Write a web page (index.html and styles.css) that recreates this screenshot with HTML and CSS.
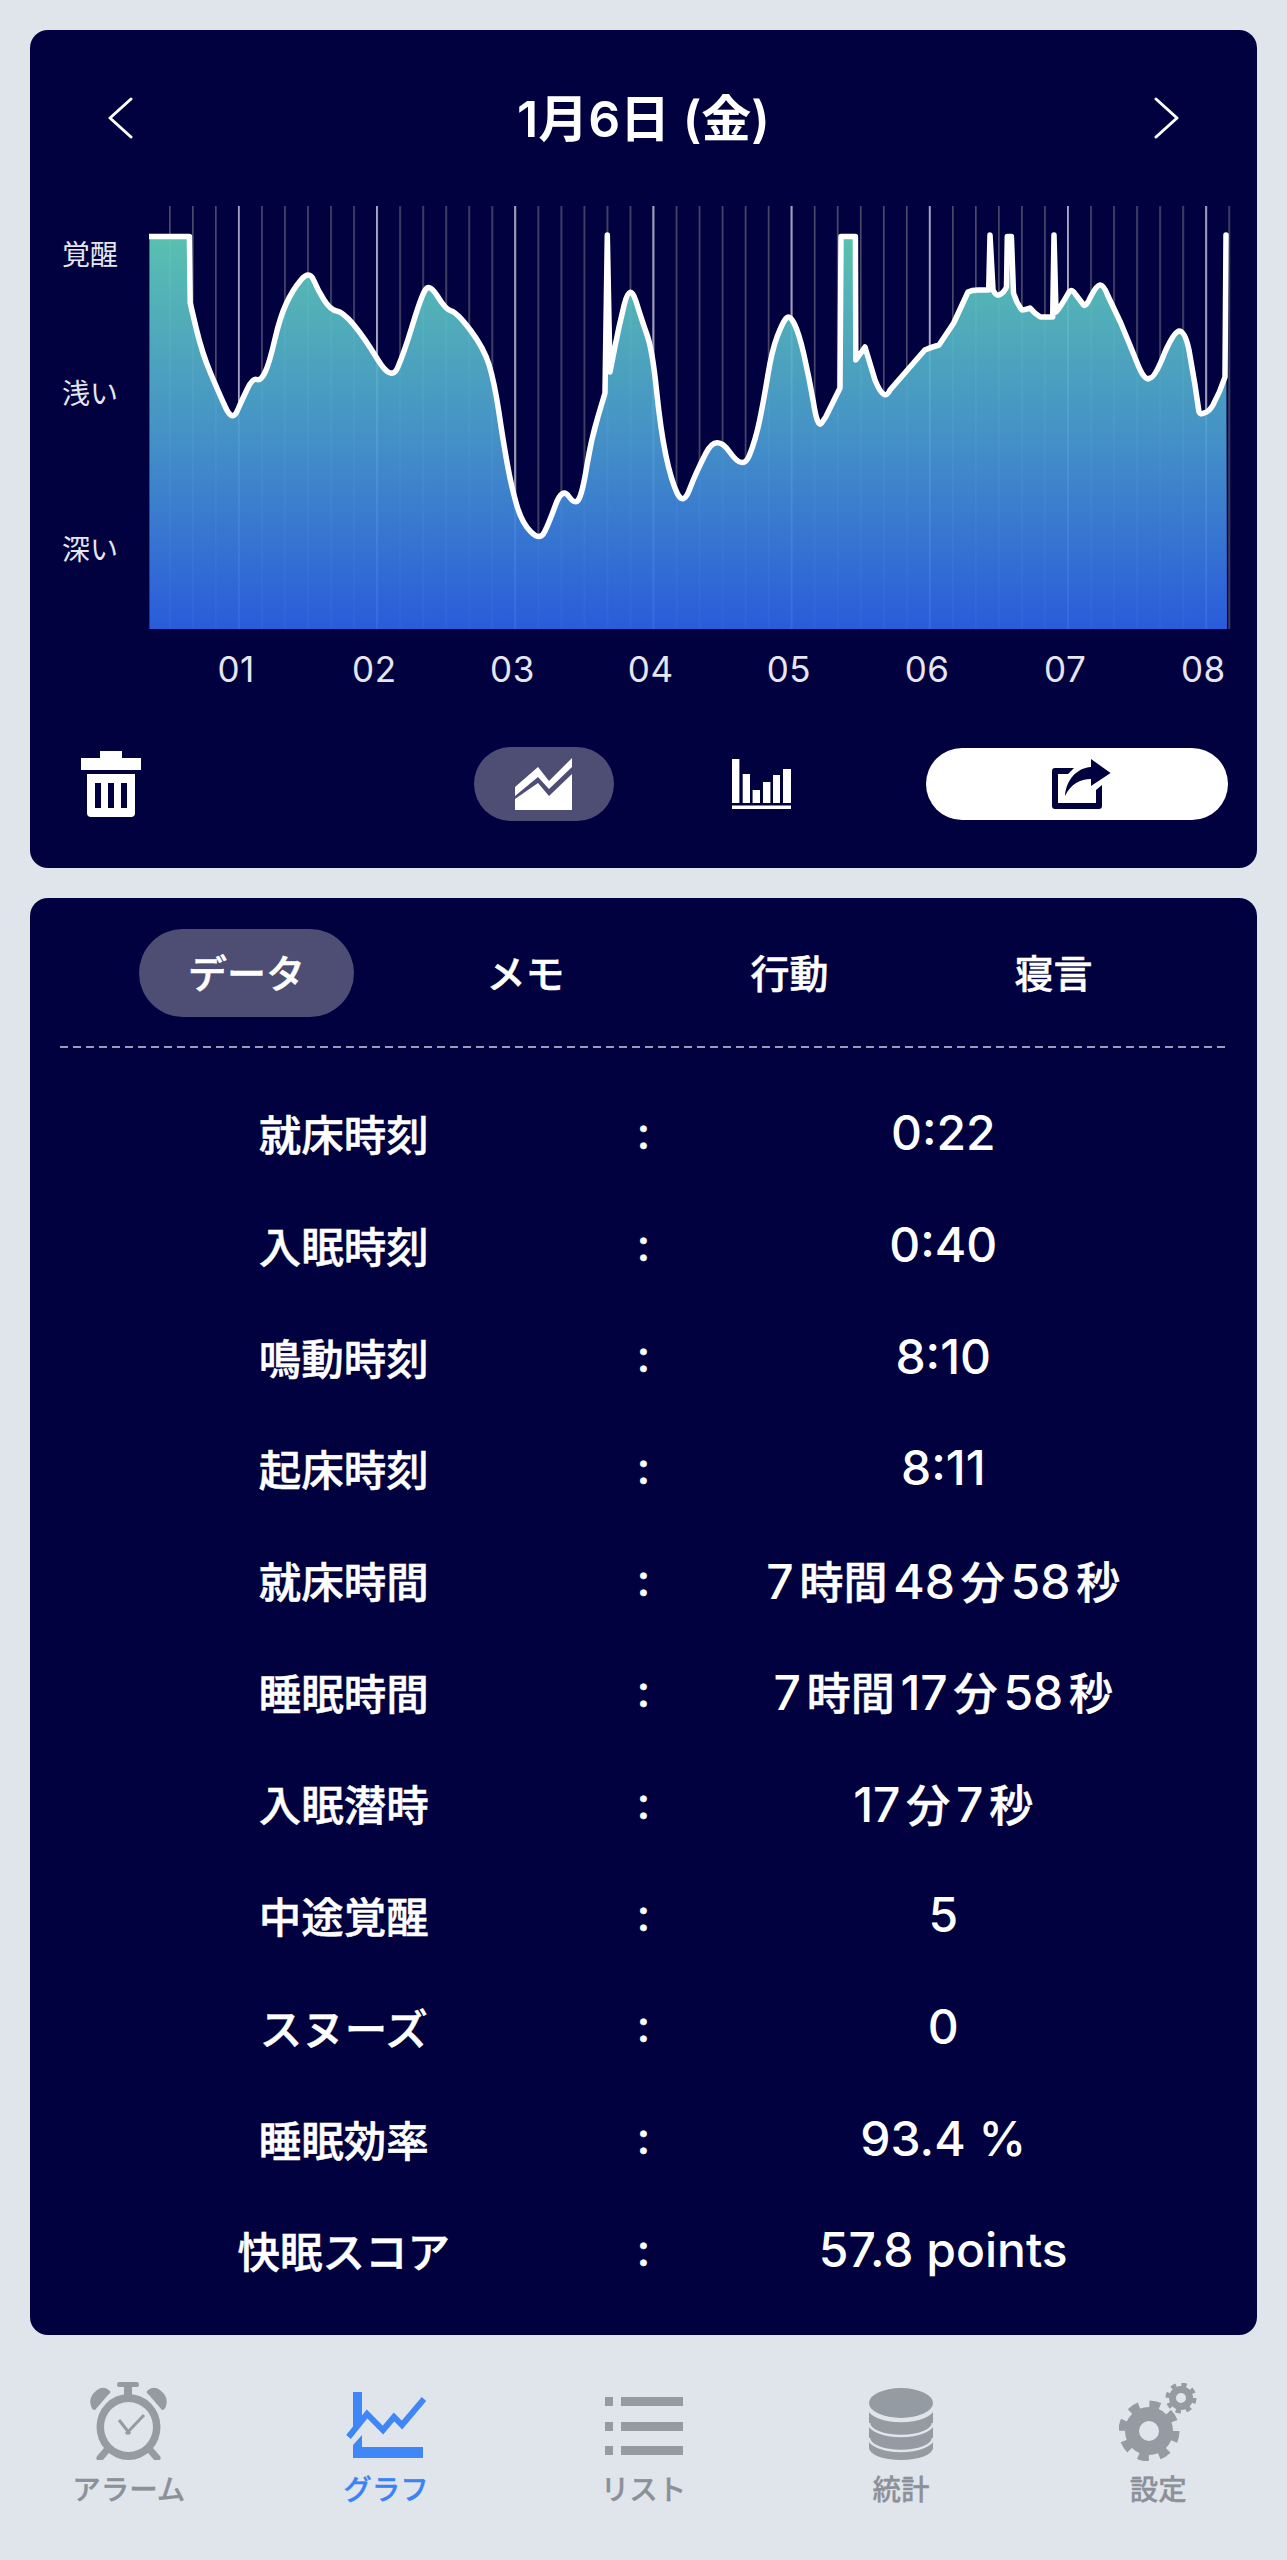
FILE: index.html
```html
<!DOCTYPE html>
<html lang="ja">
<head>
    <meta charset="UTF-8">
    <title>グラフ</title>
    <link rel="stylesheet" href="styles.css">
</head>
<body>
    <div class="card graph-card">
        <div class="date-nav">
            <svg class="chevron" viewBox="0 0 26 42"><path d="M24 2 3 21 24 40"/></svg>
            <h2 class="date-title">1月6日 (金)</h2>
            <svg class="chevron" viewBox="0 0 26 42"><path d="M2 2 23 21 2 40"/></svg>
        </div>

        <div class="chart-row">
            <div class="y-axis">
                <span>覚醒</span>
                <span>浅い</span>
                <span>深い</span>
            </div>
            <svg class="chart" viewBox="149 206 1083 424">
                <defs>
                    <linearGradient id="sleepFill" x1="0" y1="0" x2="0" y2="1">
                        <stop offset="0" stop-color="#60cfb8"/>
                        <stop offset="0.5" stop-color="#4a9dd0"/>
                        <stop offset="1" stop-color="#2d62e6"/>
                    </linearGradient>
                    <pattern id="minorGrid" patternUnits="userSpaceOnUse" x="169" y="0" width="23.03" height="10">
                        <rect width="1.6" height="10" fill="#4b4b69"/>
                    </pattern>
                    <pattern id="majorGrid" patternUnits="userSpaceOnUse" x="237.8" y="0" width="138.2" height="10">
                        <rect width="1.8" height="10" fill="#a9a8c6"/>
                    </pattern>
                </defs>
                <rect x="169" y="206" width="1062" height="423" fill="url(#minorGrid)"/>
                <rect x="237.8" y="206" width="970" height="423" fill="url(#majorGrid)"/>
                <path class="sleep-area" d="M149.4 629V236.5H189.4L190.2 303 196.1 328Q202 353 210.5 373 218.9 393 225.6 407.5 232.3 422 237.2 411 242 400 247.3 389 252.5 378 256.8 379.5 261 381 265.2 372 269.4 363 274.7 340 280 317 286.3 303.5 292.5 290 300.9 280 309.3 270 313.6 280 317.8 290 324.1 300 330.4 310 336.7 311 343 312 353.5 324.5 364 337 377.7 359.5 391.4 382 397.7 367.5 404 353 412.5 325 421 297 425.2 290 429.3 283 437.7 296.5 446 310 451.3 311 456.6 312 470.3 330 484 348 489.3 365.5 494.5 383 498.8 411.5 503 440 507.2 463.5 511.4 487 516.7 505 521.9 523 531 532 540 541 544.5 532 549 523 555.5 505 562 487 568.9 496.5 575.8 506 579.4 498 583 490 587 465 591 440 598 416.5L605 393 607.3 235 610 372 614.4 349.5Q618.7 327 624.3 304.5 630 282 635.9 301 641.8 320 647.1 335 652.4 350 656.5 390 660.6 430 665.8 455 671 480 677.1 493 683.3 506 689.5 489.5 695.7 473 706 453 716.4 433 729.7 452 743 471 749.3 455.5 755.6 440 759.7 420 763.8 400 767.9 375 772 350 777.2 336.5 782.4 323 785.9 318.5 789.4 314 794.2 323.5 799 333 804 355 809 377 813.2 401 817.5 429 821.6 423L825.7 417 840 388 841 236.5H855.4L855.8 360 865 347 875 380Q884.3 403 890 390L924.8 350Q932 347 939 345L953.7 323 968 292Q972 290 978 290L988.7 290 990 235 993 290Q996 296 999 295 1004 293 1006.5 287L1007.3 236.5H1011.4L1013.5 293Q1016 302 1021.8 310 1025 310 1030 308 1034 313 1040.3 317H1052.7L1054 235 1056 312Q1060 308 1069 292 1072 288 1076 295L1083.7 305Q1086 307 1090 298 1097 284 1100 285 1104 285 1108 296L1120.8 323Q1130 345 1138 365 1145 382 1150 378 1155 378 1165 352 1174 332 1179 331 1185 331 1189 350L1195 385 1199 412Q1200 415 1204 413 1209 412 1213 405 1220 392 1225 377L1226 235 1227 629Z"/>
                <path class="sleep-line" d="M149.4 236.5H189.4L190.2 303 196.1 328Q202 353 210.5 373 218.9 393 225.6 407.5 232.3 422 237.2 411 242 400 247.3 389 252.5 378 256.8 379.5 261 381 265.2 372 269.4 363 274.7 340 280 317 286.3 303.5 292.5 290 300.9 280 309.3 270 313.6 280 317.8 290 324.1 300 330.4 310 336.7 311 343 312 353.5 324.5 364 337 377.7 359.5 391.4 382 397.7 367.5 404 353 412.5 325 421 297 425.2 290 429.3 283 437.7 296.5 446 310 451.3 311 456.6 312 470.3 330 484 348 489.3 365.5 494.5 383 498.8 411.5 503 440 507.2 463.5 511.4 487 516.7 505 521.9 523 531 532 540 541 544.5 532 549 523 555.5 505 562 487 568.9 496.5 575.8 506 579.4 498 583 490 587 465 591 440 598 416.5L605 393 607.3 235 610 372 614.4 349.5Q618.7 327 624.3 304.5 630 282 635.9 301 641.8 320 647.1 335 652.4 350 656.5 390 660.6 430 665.8 455 671 480 677.1 493 683.3 506 689.5 489.5 695.7 473 706 453 716.4 433 729.7 452 743 471 749.3 455.5 755.6 440 759.7 420 763.8 400 767.9 375 772 350 777.2 336.5 782.4 323 785.9 318.5 789.4 314 794.2 323.5 799 333 804 355 809 377 813.2 401 817.5 429 821.6 423L825.7 417 840 388 841 236.5H855.4L855.8 360 865 347 875 380Q884.3 403 890 390L924.8 350Q932 347 939 345L953.7 323 968 292Q972 290 978 290L988.7 290 990 235 993 290Q996 296 999 295 1004 293 1006.5 287L1007.3 236.5H1011.4L1013.5 293Q1016 302 1021.8 310 1025 310 1030 308 1034 313 1040.3 317H1052.7L1054 235 1056 312Q1060 308 1069 292 1072 288 1076 295L1083.7 305Q1086 307 1090 298 1097 284 1100 285 1104 285 1108 296L1120.8 323Q1130 345 1138 365 1145 382 1150 378 1155 378 1165 352 1174 332 1179 331 1185 331 1189 350L1195 385 1199 412Q1200 415 1204 413 1209 412 1213 405 1220 392 1225 377L1226 235"/>
            </svg>
        </div>

        <div class="x-axis">
            <span>01</span><span>02</span><span>03</span><span>04</span>
            <span>05</span><span>06</span><span>07</span><span>08</span>
        </div>

        <div class="toolbar">
            <svg class="icon-trash" viewBox="0 0 60 66">
                <path d="M19 0H41V7H60V19H0V7H19Z"/>
                <path fill-rule="evenodd" d="M6 23H54V62Q54 66 50 66H10Q6 66 6 62ZM14 32V57H20V32ZM27 32V57H33V32ZM40 32V57H46V32Z"/>
            </svg>
            <div class="mode-pill">
                <svg class="icon-area" viewBox="0 0 58 52">
                    <path d="M1 29 24 9 35 23 58 0V9L35 31 24 19 1 38Z"/>
                    <path d="M1 52V41L24 25 35 38 58 16V52Z"/>
                </svg>
            </div>
            <div class="mode-plain">
                <svg class="icon-bars" viewBox="0 0 59 50">
                    <path d="M0 0H7.4V44H0ZM10.7 15H18V44H10.7ZM20.6 31H28V44H20.6ZM31 23H38.4V44H31ZM41 16H48V44H41ZM51 10H59V44H51ZM0 46.5H59V50H0Z"/>
                </svg>
            </div>
            <div class="share-btn">
                <svg class="icon-share" viewBox="0 0 59 50">
                    <path d="M22 9H3Q0 9 0 12V47Q0 50 3 50H47Q50 50 50 47V26L44 31V44H6V15H16Z"/>
                    <path d="M39 0 58.6 14 39 27V20C28 20 19 25 13 37 14 22 24 9 39 8Z"/>
                </svg>
            </div>
        </div>
    </div>

    <div class="card data-card">
        <div class="tabs">
            <div class="tab active">データ</div>
            <div class="tab">メモ</div>
            <div class="tab">行動</div>
            <div class="tab">寝言</div>
        </div>
        <div class="tabs-divider"></div>

        <div class="rows">
            <div class="row"><span>就床時刻</span><span class="sep">:</span><span class="val">0:22</span></div>
            <div class="row"><span>入眠時刻</span><span class="sep">:</span><span class="val">0:40</span></div>
            <div class="row"><span>鳴動時刻</span><span class="sep">:</span><span class="val">8:10</span></div>
            <div class="row"><span>起床時刻</span><span class="sep">:</span><span class="val">8:11</span></div>
            <div class="row"><span>就床時間</span><span class="sep">:</span><span class="val duration">7 <span class="unit">時間</span> 48 <span class="unit">分</span> 58 <span class="unit">秒</span></span></div>
            <div class="row"><span>睡眠時間</span><span class="sep">:</span><span class="val duration">7 <span class="unit">時間</span> 17 <span class="unit">分</span> 58 <span class="unit">秒</span></span></div>
            <div class="row"><span>入眠潜時</span><span class="sep">:</span><span class="val duration">17 <span class="unit">分</span> 7 <span class="unit">秒</span></span></div>
            <div class="row"><span>中途覚醒</span><span class="sep">:</span><span class="val">5</span></div>
            <div class="row"><span>スヌーズ</span><span class="sep">:</span><span class="val">0</span></div>
            <div class="row"><span>睡眠効率</span><span class="sep">:</span><span class="val">93.4 %</span></div>
            <div class="row"><span>快眠スコア</span><span class="sep">:</span><span class="val">57.8 points</span></div>
        </div>
    </div>

    <div class="tabbar">
        <div class="tabbar-item">
            <svg class="icon-alarm" viewBox="0 0 81 78">
                <path d="M31 0H49Q51 0 51 2.5 51 5 49 5H44V14H36V5H31Q29 5 29 2.5 29 0 31 0Z"/>
                <path d="M3 24Q0 15 9 8 16 3 22 9 23 11 20 13L7 28Q4 28 3 24Z"/>
                <path d="M78 24Q81 15 72 8 65 3 59 9 58 11 61 13L74 28Q77 28 78 24Z"/>
                <path fill-rule="evenodd" d="M40.5 12A32 33 0 1 0 40.5 78 32 33 0 1 0 40.5 12ZM40.5 20A24.5 25 0 1 1 40.5 70 24.5 25 0 1 1 40.5 20Z"/>
                <path class="alarm-stroke" d="M12 76 18 69M69 76 63 69"/>
                <path class="alarm-hands" d="M31 38 42 52M38 52 56 33"/>
            </svg>
            <span>アラーム</span>
        </div>
        <div class="tabbar-item active">
            <svg class="icon-graph" viewBox="0 0 80 66">
                <path d="M7 0H16V27L7 40Z"/>
                <path d="M7 66V53L16 43V55H77V66Z"/>
                <path class="graph-zigzag" d="M2.5 45 21 22 37 38 48 25 56 33 78 7"/>
            </svg>
            <span>グラフ</span>
        </div>
        <div class="tabbar-item">
            <svg class="icon-list" viewBox="0 0 78 58">
                <path d="M0 0H8V9H0ZM16 0H78V9H16ZM0 25H8V34H0ZM16 25H78V34H16ZM0 49H8V58H0ZM16 49H78V58H16Z"/>
            </svg>
            <span>リスト</span>
        </div>
        <div class="tabbar-item">
            <svg class="icon-db" viewBox="0 0 64 72">
                <ellipse cx="32" cy="15" rx="32" ry="15"/>
                <path d="M0 21A32 12 0 0 0 64 21V60A32 12 0 0 1 0 60Z"/>
                <path class="db-gap" d="M0 20A32 13 0 0 0 64 20M0 35A32 13 0 0 0 64 35M0 50A32 13 0 0 0 64 50"/>
            </svg>
            <span>統計</span>
        </div>
        <div class="tabbar-item">
            <svg class="icon-gears" viewBox="0 0 78 78">
                <circle class="gear-body" cx="30" cy="48" r="17" stroke-width="14"/>
                <circle class="gear-teeth" cx="30" cy="48" r="27" stroke-width="7" stroke-dasharray="10.7 10.5"/>
                <circle class="gear-body" cx="62" cy="15" r="8.5" stroke-width="7"/>
                <circle class="gear-teeth" cx="62" cy="15" r="13.5" stroke-width="4" stroke-dasharray="5.3 5.3"/>
            </svg>
            <span>設定</span>
        </div>
    </div>
</body>
</html>
```

FILE: styles.css
```css
* {
    box-sizing: border-box;
}
body {
    margin: 0;
    padding: 30px 30px 0;
    height: 2560px;
    background: #e0e5ec;
    font-family: Inter, "Noto Sans CJK JP", sans-serif;
    color: #fff;
}
.card {
    background: #010140;
    border-radius: 18px;
}
.graph-card {
    height: 838px;
    padding: 0 25px 0 32px;
}

/* date header */
.date-nav {
    height: 176px;
    display: flex;
    align-items: center;
    justify-content: space-between;
    padding: 0 52px 0 45px;
}
.date-title {
    margin: 0 0 6px;
    font-size: 50px;
    font-weight: 600;
}
.chevron {
    width: 26px;
    height: 42px;
    fill: none;
    stroke: #fff;
    stroke-width: 3;
    stroke-linecap: round;
    stroke-linejoin: round;
}

/* chart */
.chart-row {
    display: flex;
    height: 424px;
}
.y-axis {
    width: 87px;
    flex: none;
    display: flex;
    flex-direction: column;
    padding-top: 32px;
    color: #e6e6f0;
    font-size: 28px;
    line-height: 34px;
}
.y-axis span {
    display: block;
    height: 34px;
}
.y-axis span:nth-child(2) {
    margin-top: 105px;
}
.y-axis span:nth-child(3) {
    margin-top: 122px;
}
.chart {
    width: 1083px;
    height: 424px;
    flex: none;
}
.sleep-area {
    fill: url(#sleepFill);
    opacity: 0.93;
}
.sleep-line {
    fill: none;
    stroke: #fff;
    stroke-width: 5.5;
    stroke-linejoin: round;
    stroke-linecap: round;
}
.x-axis {
    display: flex;
    padding-left: 105px;
    height: 78px;
    align-items: center;
    color: #e6e6f0;
    font-size: 35px;
    letter-spacing: 0.5px;
}
.x-axis span {
    width: 138.2px;
    text-align: center;
    flex: none;
}

/* toolbar */
.toolbar {
    display: flex;
    align-items: center;
    height: 74px;
    margin-top: 39px;
}
.icon-trash {
    width: 60px;
    height: 66px;
    margin-left: 19px;
    fill: #fff;
}
.mode-pill,
.mode-plain {
    width: 140px;
    height: 74px;
    border-radius: 37px;
    display: flex;
    align-items: center;
    justify-content: center;
}
.mode-pill {
    margin-left: 333px;
    background: #4e4d74;
}
.mode-plain {
    margin-left: 77px;
}
.icon-area {
    width: 58px;
    height: 52px;
    margin-right: 2px;
    fill: #fff;
}
.icon-bars {
    width: 59px;
    height: 50px;
    fill: #fff;
}
.share-btn {
    width: 302px;
    height: 72px;
    margin-left: 95px;
    border-radius: 36px;
    background: #fff;
    display: flex;
    align-items: center;
    justify-content: center;
}
.icon-share {
    width: 59px;
    height: 50px;
    margin-left: 8px;
    fill: #010140;
}

/* data card */
.data-card {
    height: 1437px;
    margin-top: 30px;
    padding: 31px 30px 0;
}
.tabs {
    display: flex;
    gap: 49px;
    padding-left: 79px;
}
.tab {
    width: 215px;
    height: 88px;
    padding-bottom: 4px;
    border-radius: 44px;
    display: flex;
    align-items: center;
    justify-content: center;
    font-size: 39px;
    font-weight: 500;
    -webkit-text-stroke: 0.5px #fff;
}
.tab.active {
    margin-right: 15px;
    background: #4e4d74;
}
.tabs-divider {
    height: 2px;
    margin-top: 29px;
    background: repeating-linear-gradient(90deg, #9c9cb6 0 8px, transparent 8px 13px);
}
.rows {
    padding-top: 29px;
}
.row {
    display: grid;
    grid-template-columns: 1fr 32px 1fr;
    height: 111.7px;
    align-items: center;
    text-align: center;
    font-size: 42.5px;
    font-weight: 500;
    -webkit-text-stroke: 0.5px #fff;
}
.row .sep {
    font-size: 44px;
}
.row .val {
    font-size: 48px;
    -webkit-text-stroke: 0;
}
.row .duration {
    word-spacing: -7px;
}
.unit {
    font-size: 44px;
    -webkit-text-stroke: 0.5px #fff;
}

/* bottom bar */
.tabbar {
    display: flex;
    width: 1287px;
    margin: 47px -30px 0;
}
.tabbar-item {
    flex: 1;
    height: 125px;
    display: flex;
    flex-direction: column;
    align-items: center;
    justify-content: flex-end;
    gap: 12px;
    color: #8b9099;
    font-size: 28.5px;
    font-weight: 500;
    line-height: 34px;
    -webkit-text-stroke: 0.3px currentColor;
}
.tabbar-item svg {
    fill: #959ba3;
}
.tabbar-item.active {
    color: #3b82f6;
}
.tabbar-item.active svg {
    fill: #3f86f7;
}
.icon-alarm {
    width: 81px;
    height: 78px;
    margin-bottom: 1px;
}
.icon-graph {
    width: 80px;
    height: 66px;
    margin-bottom: 3px;
}
.icon-list {
    width: 78px;
    height: 58px;
    margin-bottom: 6px;
}
.icon-db {
    width: 64px;
    height: 72px;
    margin-bottom: 1px;
}
.icon-gears {
    width: 78px;
    height: 78px;
}
.alarm-stroke {
    fill: none;
    stroke: #959ba3;
    stroke-width: 7;
    stroke-linecap: round;
}
.alarm-hands {
    fill: none;
    stroke: #959ba3;
    stroke-width: 3;
}
.graph-zigzag {
    fill: none;
    stroke: #3f86f7;
    stroke-width: 6;
}
.db-gap {
    fill: none;
    stroke: #e0e5ec;
    stroke-width: 2.5;
}
.gear-body {
    fill: none;
    stroke: #959ba3;
}
.gear-teeth {
    fill: none;
    stroke: #959ba3;
}
```
